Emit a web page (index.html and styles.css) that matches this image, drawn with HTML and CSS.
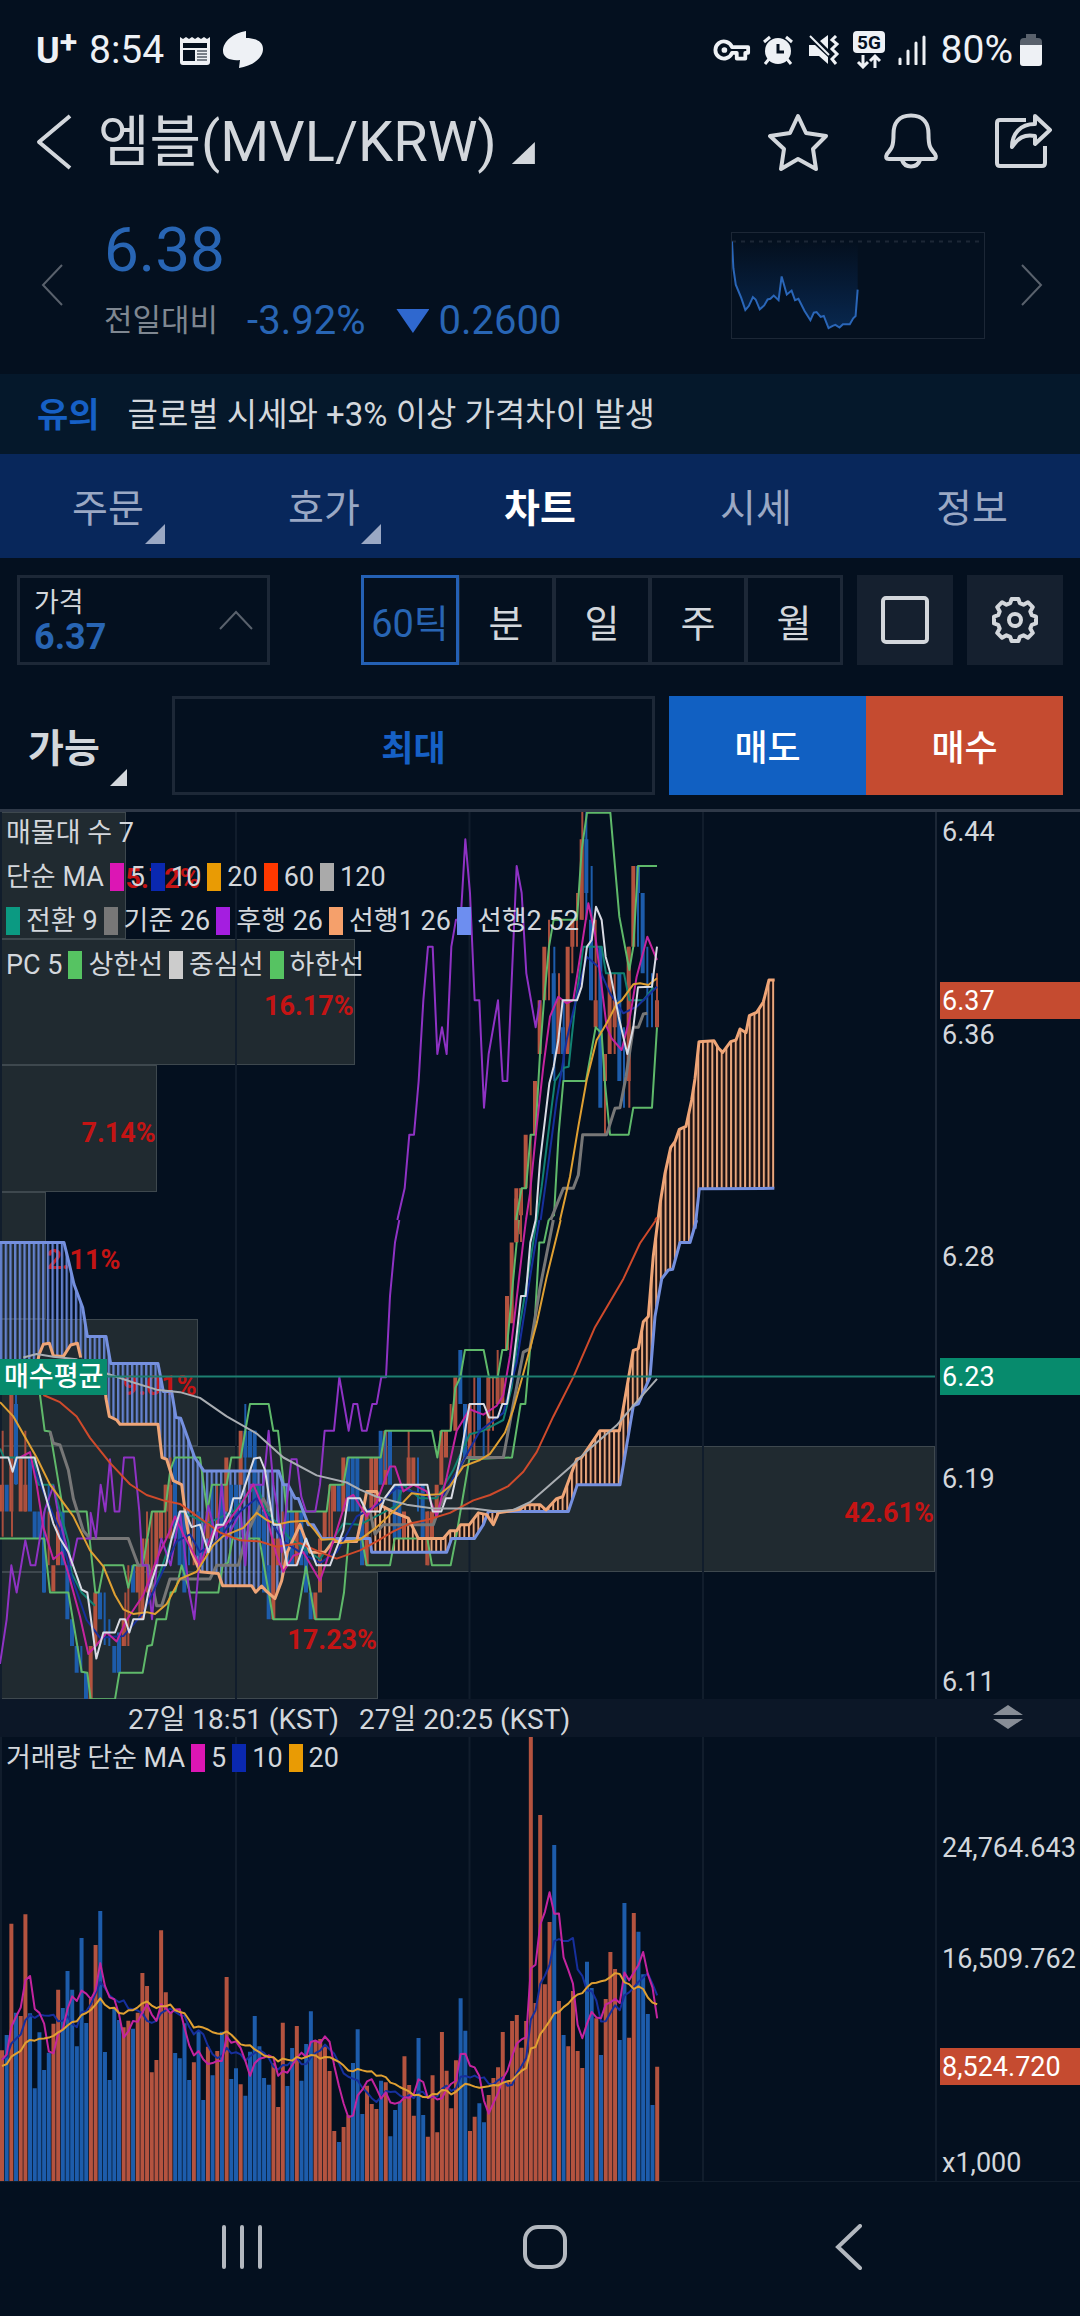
FILE: index.html
```html
<!DOCTYPE html>
<html lang="ko">
<head>
    <meta charset="utf-8">
    <meta name="viewport" content="width=device-width, initial-scale=1">
    <title>엠블(MVL/KRW) 차트</title>
    <link rel="stylesheet" href="styles.css">
</head>
<body>
    <div class="status-bar">
        <span class="carrier">U<sup>+</sup></span>
        <span class="clock">8:54</span>
        <svg class="icon-news" width="32" height="32" viewBox="0 0 32 32">
            <path d="M1 3l3 2 3-2 3 2 3-2 3 2 3-2 3 2 3-2 3 2 3-2v25q0 3-3 3H4q-3 0-3-3z" fill="#eef1f5"/>
            <path d="M4 9h24v5H4zM4 16h12v11H4z" fill="#04101f"/>
            <path d="M18 17h10M18 20h10M18 23h10M18 26h10" stroke="#04101f"/>
        </svg>
        <svg width="40" height="38" viewBox="0 0 40 38">
            <path d="M23 0C11 2 0 10 0 20c0 7 8 10 17 9l-1 8c12-2 24-9 24-19 0-8-8-11-17-11z" fill="#eef1f5"/>
        </svg>
        <div class="status-right">
            <svg width="38" height="24" viewBox="0 0 40 24" fill="none" stroke="#eef1f5" stroke-width="4">
                <path d="M20 9a9 9 0 1 0 0 6h5v6h9v-6h3V9z" stroke-linejoin="round"/>
                <circle cx="12" cy="12" r="2" fill="#eef1f5" stroke-width="2"/>
            </svg>
            <svg class="icon-alarm" width="30" height="30" viewBox="0 0 30 30">
                <circle cx="15" cy="16" r="13" fill="#eef1f5"/>
                <path d="M1 7l6-5M29 7l-6-5M6 24l-4 5M24 24l4 5" stroke="#eef1f5" stroke-width="3"/>
                <path d="M15 9v8h6" fill="none" stroke="#04101f" stroke-width="3"/>
            </svg>
            <svg class="icon-mute" width="32" height="30" viewBox="0 0 32 30">
                <path d="M1 10h6l13 12v7l-9-8H1zM12 6l8-6v14z" fill="#eef1f5"/>
                <path d="M2 1l19 19" stroke="#eef1f5" stroke-width="2"/>
                <path d="M28 1l-4 4 5 4-5 5 5 5-5 5 4 5" fill="none" stroke="#eef1f5" stroke-width="3"/>
            </svg>
            <svg class="icon-5g" width="34" height="38" viewBox="0 0 34 38">
                <rect x="1" width="32" height="22" rx="4" fill="#eef1f5"/>
                <text x="17" y="18" class="net-label">5G</text>
                <path d="M11 24v11M6 31l5 5 5-5M23 37V25M18 30l5-5 5 5" fill="none" stroke="#eef1f5" stroke-width="3"/>
            </svg>
            <svg class="icon-signal" width="28" height="30" viewBox="0 0 28 30">
                <path d="M2 24v5M10 16v13M18 8v21M26 2v27" stroke="#eef1f5" stroke-width="3" stroke-linecap="round"/>
            </svg>
            <span class="clock">80%</span>
            <svg width="22" height="34" viewBox="0 0 22 34">
                <path d="M6 1h10v4h2q4 0 4 4v4H0V9q0-4 4-4h2z" fill="#59616c"/>
                <path d="M0 12h22v18q0 3-3 3H3q-3 0-3-3z" fill="#eef1f5"/>
            </svg>
        </div>
    </div>

    <header class="title-bar">
        <button class="icon-button" aria-label="뒤로">
            <svg width="36" height="58" viewBox="0 0 36 58"><path d="M34 3L3 29l31 26" class="outline"/></svg>
        </button>
        <h1>엠블(MVL/KRW)</h1>
        <span class="corner corner-title"></span>
        <div class="title-actions">
            <button class="icon-button" aria-label="관심">
                <svg width="60" height="60" viewBox="0 0 60 60"><path d="M30 4l8 17 20 3-13 13 3 20-18-10-17 10 3-20L2 24l20-3z" class="outline"/></svg>
            </button>
            <button class="icon-button" aria-label="알림">
                <svg width="60" height="60" viewBox="0 0 60 60"><path d="M30 3.500C17 3.500 12.500 12 12.500 22 12.500 34 11 36 6 42Q3.500 47 8 47H52Q56.500 47 54 42C49 36 47.500 34 47.500 22 47.500 12 43 3.500 30 3.500zM21 48a9.500 9.500 0 0 0 18 0" class="outline"/></svg>
            </button>
            <button class="icon-button" aria-label="공유">
                <svg width="60" height="60" viewBox="0 0 60 60"><path d="M32 8H6q-3 0-3 3v40q0 3 3 3h42q3 0 3-3V34M41 4l15 14-15 14v-8c-11-2-17 2-23 11 0-13 8-23 23-23z" class="outline"/></svg>
            </button>
        </div>
    </header>

    <section class="quote">
        <button class="icon-button" aria-label="이전 종목">
            <svg width="22" height="42" viewBox="0 0 22 42"><path d="M21 1L2 21l19 20" class="outline-dim"/></svg>
        </button>
        <div class="quote-info">
            <div class="quote-price">6.38</div>
            <div class="quote-change">
                <span class="quote-label">전일대비</span>
                <span>-3.92%</span>
                <span class="quote-diff"><i class="triangle-down"></i>0.2600</span>
            </div>
        </div>
        <svg class="sparkline" viewBox="556 693 736 319" preserveAspectRatio="none">
            <defs>
                <linearGradient id="sparkFill" x1="0" y1="0" x2="0" y2="1">
                    <stop offset="0" stop-color="#0a2f63" stop-opacity="0"/>
                    <stop offset="1" stop-color="#0a3468" stop-opacity=".65"/>
                </linearGradient>
            </defs>
            <path d="M556 719H1292" class="spark-base"/>
            <path fill="url(#sparkFill)" d="M556 719L560 800 567 850 583 890 595 927 605 915 617 888 625 895 637 925 650 913 660 895 668 893 678 883 692 897 701 825 716 880 730 868 740 897 750 893 768 930 785 958 795 935 803 933 815 948 824 945 838 982 850 975 858 972 870 980 880 970 900 970 910 952 917 945 923 865V719z"/>
            <path class="spark-line" d="M556 719L560 800 567 850 583 890 595 927 605 915 617 888 625 895 637 925 650 913 660 895 668 893 678 883 692 897 701 825 716 880 730 868 740 897 750 893 768 930 785 958 795 935 803 933 815 948 824 945 838 982 850 975 858 972 870 980 880 970 900 970 910 952 917 945 923 865"/>
        </svg>
        <button class="icon-button" aria-label="다음 종목">
            <svg width="22" height="42" viewBox="0 0 22 42"><path d="M1 1l19 20L1 41" class="outline-dim"/></svg>
        </button>
    </section>

    <div class="notice"><strong>유의</strong><span>글로벌 시세와 +3% 이상 가격차이 발생</span></div>

    <nav class="tabs">
        <button>주문<span class="corner corner-tab"></span></button>
        <button>호가<span class="corner corner-tab"></span></button>
        <button class="active">차트</button>
        <button>시세</button>
        <button>정보</button>
    </nav>

    <div class="toolbar">
        <button class="price-select">
            <span class="price-text"><span>가격</span><b>6.37</b></span>
            <svg width="34" height="20" viewBox="0 0 34 20"><path d="M1 19L17 2l16 17" class="outline-dim"/></svg>
        </button>
        <div class="periods">
            <button class="active">60틱</button>
            <button>분</button>
            <button>일</button>
            <button>주</button>
            <button>월</button>
        </div>
        <button class="tool" aria-label="전체화면">
            <svg width="48" height="48" viewBox="0 0 48 48"><rect x="2" y="2" width="44" height="44" rx="3" class="outline"/></svg>
        </button>
        <button class="tool" aria-label="설정">
            <svg width="48" height="48" viewBox="-24 -24 48 48"><path class="outline" d="M-3.400-21L3.400-21 4.800-16.800 8.500-15.300 12.900-17.800 17.800-12.900 15.300-8.500 16.800-4.800 21-3.400 21 3.400 16.800 4.800 15.300 8.500 17.800 12.900 12.900 17.800 8.500 15.300 4.800 16.800 3.400 21-3.400 21-4.800 16.800-8.500 15.300-12.900 17.800-17.800 12.900-15.300 8.500-16.800 4.800-21 3.400-21-3.400-16.800-4.800-15.300-8.500-17.800-12.900-12.900-17.800-8.500-15.300-4.800-16.800z"/><circle r="6" class="outline"/></svg>
        </button>
    </div>

    <div class="order-bar">
        <button class="available">가능<span class="corner corner-available"></span></button>
        <input class="amount" type="text" value="최대" aria-label="주문 수량">
        <div class="order-buttons">
            <button class="sell">매도</button>
            <button class="buy">매수</button>
        </div>
    </div>

    <main class="chart">
        <div class="pane price-pane">
            <div class="plot">
                <div class="profile" id="profile"></div>
                <svg class="canvas" viewBox="0 0 935 887" preserveAspectRatio="none">
                    <defs>
                        <pattern id="hatchBlue" width="14.040" height="20" patternUnits="userSpaceOnUse"><rect width="7" height="20" fill="#6c8ce0"/></pattern>
                        <pattern id="hatchOrange" width="14.040" height="20" patternUnits="userSpaceOnUse"><rect width="14.040" height="20" fill="#1a1012"/><rect width="6" height="20" fill="#e9a67c"/></pattern>
                    </defs>
                    <path class="grid" d="M1 0V887M236 0V887M469.500 0V887M703 0V887"/>

                    <!-- 6.28 아래 구간 -->
                    <g transform="translate(0 408) scale(.33333 .35714)">
                        <path fill="url(#hatchBlue)" opacity=".9" d="M0 63H192L207 120 222 180 248 245 262 326 318 326 332 402 474 402 490 480 515 480 528 553 542 555 584 665 612 703 836 703 850 741 864 741 885 779 862 930 845 1010 825 1060 800 1040 785 1025 767 1042 755 1024 668 1024 655 990 600 985 575 930 560 850 545 741 520 730 500 670 486 665 474 572 360 572 350 560 328 550 318 500 312 440 242 385 232 345 212 350 190 382 160 380 148 345 130 348 118 375 112 400H0z"/>
                        <path fill="url(#hatchOrange)" d="M1115 930L1115 800 1130 770 1145 800 1185 820 1225 835 1255 892 1330 892 1350 870 1370 870 1382 853 1408 853 1435 820 1460 825 1480 853 1495 820 1560 810 1580 797 1620 797 1638 812 1670 780 1688 775 1730 670 1745 665 1800 590 1858 590 1900 365 1915 360 1930 285 1945 270 1960 100 1974 0 2090 0 2070 63 2040 63 2018 138 2005 140 1985 165 1965 270 1950 440 1915 515 1900 520 1860 741 1732 741 1705 816 1465 816 1450 853 1423 892 1355 892 1340 930z"/>

                        <path class="down-body" d="M20 741V816M48 515V740M90 665V816M104 816V892M118 816V892M132 892V1043M188 816V967M202 967V1118M216 1118V1193M230 1193V1268M258 1268V1342M300 1043V1118M343 1193V1268M357 1155V1268M399 967V1043M525 665V892M539 816V967M553 816V1043M595 816V940M665 741V892M693 741V816M708 741V892M736 590V665M750 590V665M764 590V892M778 741V892M792 816V1043M806 967V1118M862 816V967M876 816V967M904 816V967M918 892V1043M932 1043V1118M1016 741V816M1044 665V816M1058 665V816M1072 665V816M1086 816V967M1142 590V741M1170 590V741M1184 741V892M1198 741V892M1268 741V892M1381 364V515M1395 515V665M1437 440V590"/>
                        <path class="up-body" d="M6 741V816M34 490V816M62 665V816M76 741V816M174 816V967M160 967V1040M272 1193V1342M286 1043V1193M371 1118V1193M413 967V1043M427 892V1118M441 892V967M469 816V967M483 816V892M497 741V816M511 741V892M623 816V892M679 665V816M722 590V741M820 892V1118M834 892V967M890 816V967M960 892V1043M946 1043V1118M974 816V892M1002 741V816M1030 665V816M1100 816V967M1114 665V816M1128 665V816M1156 590V741M1212 816V892M1226 665V741M1240 665V741M1282 816V967M1296 816V892M1310 741V816M1324 590V741M1338 590V665M1366 440V590M1409 515V665M1465 440V590M1493 440V515M1507 440V515M1521 213V364M1535 63V289M1549-60V63"/>
                        <path class="down-wick" d="M48 440V741M132 816V1043M146 741V892M244 1193V1268M314 1043V1190M328 1118V1193M567 892V967M609 892V967M637 741V892M736 515V741M764 590V892M1254 665V816M1451 590V665M1156 590V700"/>
                        <path class="up-wick" d="M8 590V887M36 440V887M76 590V816M146 816V967M385 967V1193M376 1043V1193M418 967V1118M441 816V1043M455 816V1043M497 741V892M511 665V892M581 816V967M651 741V892M848 816V967M988 741V892M996 741V892M1226 590V741M1284 816V967M1352 515V590M1423 440V665M1465 440V665M1479 440V590M1493 364V515M1560 0V40"/>

                        <path class="pc" d="M110 440L120 490 134 590 150 592 190 816 260 816 286 1043 296 1043 312 967 370 967 385 1030 400 967 428 967 442 892 456 816 495 816 511 700 525 665 600 665 622 816 636 741 680 741 694 665 722 665 736 590 750 515 806 515 820 590 834 590 860 816 980 816 990 741 1030 741 1044 665 1142 665 1156 590 1296 590 1312 665 1324 590 1352 590 1366 470 1381 440 1395 364 1451 364 1467 440 1493 440 1507 364 1520 364 1535 213 1550 63 1556 0"/>
                        <path class="pc" d="M0 892H132L150 1043 205 1043 245 1265 262 1268 272 1342 345 1342 358 1268 428 1268 442 1193 456 1190 470 1118 498 1118 512 1043 526 1040 545 967 570 1043 655 1043 668 967 684 960 698 892 778 892 806 1043 820 1118 890 1118 918 970 946 1118 1018 1118 1032 1043 1046 892 1086 892 1100 967 1170 967 1184 892 1282 892 1296 967 1352 967 1366 900 1408 670 1536 665 1562 515 1576 515 1590 364 1604 289 1618 63 1632 63 1646 0"/>
                        <path class="conv" d="M0 640L12 665 100 665 115 741 160 741 180 816 205 900 215 990 245 1043 285 1080M460 1043L490 960 515 892 545 816 620 850 700 816 770 741 800 816 870 892 960 950 1030 850 1080 853 1190 800 1210 741 1260 779 1310 779 1360 700 1409 600 1450 590 1510 560 1535 470 1560 290 1580 180 1610 0"/>
                        <path class="base" d="M150 592L160 625 180 630 205 700 220 780 250 870 270 892 385 892 415 967 445 967 470 1080 485 1080 510 1005 630 1005 650 967 715 967 740 880 790 780 810 816M1110 816L1125 880 1150 853 1300 853 1320 800 1395 665 1510 665 1540 515 1570 370 1590 360 1620 190 1660 0"/>
                        <path class="lead2" d="M0 63H192L207 120 222 180 248 245 262 326 318 326 332 402 474 402 490 480 515 480 528 553 542 555 584 665 612 703 836 703 850 741 864 741 885 779 895 780 925 853 940 853 965 892 1110 892 1115 930 1340 930 1355 892 1423 892 1450 853 1465 816 1705 816 1732 741 1860 741 1900 520 1915 515 1950 440 1965 270 1985 165 2005 140 2018 138 2040 63 2070 63 2090 0"/>
                        <path class="lead1" d="M112 400L118 375 130 348 148 345 160 380 190 382 212 350 232 345 242 385M312 440L318 500 328 550 350 560 360 572 474 572 486 665 500 670 520 730 545 741 560 850 575 930 600 985 655 990 668 1024 755 1024 767 1042 785 1025 800 1040 825 1060 845 1010 862 930 900 853 930 930 975 930 1000 900 1070 900 1086 830 1100 760 1130 760 1145 800 1185 820 1225 835 1255 892 1330 892 1350 870 1370 870 1382 853 1408 853 1435 820 1460 825 1480 853 1495 820 1560 810 1580 797 1620 797 1638 812 1670 780 1688 775 1730 670 1745 665 1800 590 1858 590 1900 365 1915 360 1930 285 1945 270 1960 100 1974 0"/>
                        <path class="lag" d="M0 1243L20 1118 34 967 50 1043 76 897 92 967 106 967 118 900 135 810 160 745 176 830 215 967 232 892 272 892 272 820 288 890 302 741 316 816 330 670 344 816 358 816 372 665 402 665 418 816 428 967 442 967 456 1118 470 967 484 892 512 967 540 816 568 1043 583 1118 597 967 625 800 650 892 665 741 680 892 722 816 736 967 752 741 790 741 806 590 820 741 834 816 845 930 874 670 890 670 904 775 918 816 946 816 960 741 974 590 1002 590 1018 440 1046 590 1060 515 1072 515 1086 590 1100 590 1117 515 1130 515 1144 440 1158 440 1170 213 1185 63 1198 0"/>
                        <path class="ma10" d="M90 665L130 760 180 870 215 1000 260 1120 300 1170 370 1165 430 1100 480 1000 530 900 570 880 600 930 650 900 720 816 770 779 850 900 900 930 960 960 1010 930 1070 830 1130 800 1190 750 1280 770 1330 770 1380 690 1440 590 1510 540 1550 400 1580 220 1618 0"/>
                        <path class="ma5" d="M60 665L90 650 110 741 130 860 160 950 185 930 205 990 240 1110 265 1215 285 1195 320 1155 350 1180 380 1120 430 1050 470 950 505 880 525 830 550 880 600 967 640 870 680 850 720 800 760 740 800 830 830 940 850 985 880 940 910 930 960 1010 1000 900 1040 780 1060 770 1100 830 1130 790 1170 690 1185 690 1210 760 1240 741 1280 760 1310 830 1340 720 1370 590 1409 530 1450 545 1490 520 1510 490 1530 380 1550 220 1570 60 1578 0"/>
                        <path class="ma20" d="M0 510L40 550 110 665 150 741 220 830 270 925 310 970 345 1050 370 1090 400 1103 440 1098 465 1103 500 1075 540 1005 590 985 640 910 670 885 730 862 770 820 800 840 830 853 870 845 920 842 945 870 965 895 1000 893 1020 905 1080 895 1130 860 1170 825 1210 790 1235 765 1275 770 1320 768 1350 745 1390 690 1440 672 1470 655 1515 595 1540 530 1570 430 1610 290 1640 160 1682 0"/>
                        <path class="ma60" d="M130 490L180 510 230 550 270 610 330 680 390 740 440 770 490 785 540 795 600 835 660 875 720 897 780 900 830 915 900 905 960 930 1010 948 1080 925 1130 900 1180 872 1230 850 1280 840 1350 820 1420 785 1470 770 1525 745 1570 705 1610 650 1660 550 1720 440 1785 300 1870 165 1920 65 1968 0"/>
                        <path class="mid" d="M0 665H25L38 705 50 665 104 665 160 850 180 892 205 930 245 1035 262 1043 289 1228 310 1155 345 1155 360 1118 375 1118 388 1155 400 1118 430 1118 445 1043 470 967 498 967 515 892 540 816 555 816 575 860 600 853 625 930 650 853 670 853 690 816 700 779 722 779 736 741 762 668 780 665 795 700 820 853 840 853 862 967 890 967 918 892 950 967 990 967 1005 930 1030 870 1044 779 1080 779 1100 816 1140 816 1154 779 1184 741 1282 741 1298 816 1324 816 1338 779 1354 779 1381 665 1409 515 1451 515 1467 553 1493 553 1507 515 1521 515 1535 440 1549 330 1563 213 1577 213 1591 63 1607 0"/>
                        <path class="ma120" d="M70 385L110 375 160 383 230 390 320 430 400 455 470 475 540 482 600 498 680 550 770 598 850 665 950 715 1040 735 1080 755 1130 775 1220 797 1300 808 1420 808 1490 816 1540 812 1590 790 1640 750 1710 692 1770 640 1850 575 1900 520 1971 445"/>
                    </g>

                    <!-- 6.28 위 구간 -->
                    <g transform="translate(0 -12) scale(.33333)">
                        <path fill="url(#hatchOrange)" d="M1974 1260L1980 1212 1995 1120 2012 1043 2025 1025 2038 988 2058 979 2075 900 2085 836 2097 725 2142 722 2155 744 2168 757 2192 725 2208 720 2220 687 2238 698 2248 647 2270 637 2290 606 2307 540 2324 540V1165H2098L2090 1260z"/>
                        <path class="down-body" d="M1661 520V762M1689 682V762M1759 118V279M1773 359V601M1801 440V923M1858 520V843M1914 198V279M1928 279V520"/>
                        <path class="up-body" d="M1549 1165V1326M1563 1165V1246M1577 1004V1165M1605 843V1004M1619 601V762M1633 440V601M1675 601V762M1703 440V762M1717 359V440M1745 118V359M1787 601V682M1815 762V843M1829 520V762M1844 601V682M1886 440V843M1900 198V440M1971 601V682"/>
                        <path class="down-wick" d="M1663 440V843M1691 601V843M1759 36V359M1775 198V601M1872 682V923M1914 198V440M1942 440V682M1956 520V682"/>
                        <path class="up-wick" d="M1563 1165V1326M1592 1004V1246M1647 359V601M1677 520V762M1717 359V520M1731 279V440M1747 36V359M1787 359V682M1815 762V1004M1844 520V762M1888 440V923M1971 520V682"/>
                        <path class="pc" d="M1548 1260L1565 1165 1578 1165 1592 1004 1606 1004 1620 762 1632 600 1647 440 1661 359 1731 359 1745 150 1761 38 1831 38 1858 350 1888 510 1900 440 1914 198 1971 198"/>
                        <path class="pc" d="M1646 1260L1662 1246 1676 1000 1690 843 1758 843 1787 682 1805 700 1815 850 1830 1004 1886 1004 1900 923 1956 923 1971 682"/>
                        <path class="conv" d="M1610 1260L1625 1160 1650 960 1665 843 1692 803 1706 800 1725 620 1750 440 1805 440 1818 520 1872 520 1888 601 1930 601 1960 562"/>
                        <path class="base" d="M1652 1260L1690 1165 1720 1165 1735 1125 1748 1004 1820 1004 1845 925 1860 923 1878 830 1890 750 1900 682 1915 682 1930 642 1942 640"/>
                        <path class="lead2" d="M2085 1286L2098 1166 2323 1165"/>
                        <path class="lead1" d="M1974 1260L1980 1212 1995 1120 2012 1043 2025 1025 2038 988 2058 979 2075 900 2085 836 2097 725 2142 722 2155 744 2168 757 2192 725 2208 720 2220 687 2238 698 2248 647 2270 637 2290 606 2307 540 2324 540"/>
                        <path class="lag" d="M1192 1260L1214 1165 1228 1004 1242 1004 1256 843 1270 601 1284 440 1298 440 1312 762 1326 682 1340 762 1354 440 1368 359 1382 359 1396 118 1410 279 1424 601 1438 601 1452 923 1466 762 1494 601 1508 843 1522 843 1550 198 1565 279 1579 520 1607 682 1620 601"/>
                        <path class="ma10" d="M1622 1260L1640 1130 1670 900 1700 720 1730 590 1760 470 1795 500 1830 580 1870 640 1910 620 1971 560"/>
                        <path class="ma5" d="M1578 1260L1590 1180 1610 980 1630 800 1650 650 1675 590 1700 610 1720 600 1745 440 1765 310 1785 400 1805 560 1820 680 1835 715 1865 750 1890 650 1910 530 1942 410 1971 480"/>
                        <path class="ma20" d="M1680 1260L1710 1130 1735 980 1760 840 1790 720 1820 670 1850 612 1865 601 1900 553 1920 550 1945 555 1971 535"/>
                        <path class="ma60" d="M1965 1260L1971 1252"/>
                        <path class="mid" d="M1607 1260L1620 1084 1648 850 1661 800 1675 720 1688 601 1731 601 1745 560 1761 440 1775 420 1788 320 1805 360 1817 470 1831 520 1856 650 1882 762 1900 682 1914 562 1956 560 1971 440"/>
                    </g>
                    <path class="average" d="M0 564.500H935"/>
                </svg>
                <div class="average-label">매수평균</div>
                <div class="legend">
                    <div>매물대 수 7</div>
                    <div>단순 MA<i class="c-ma5"></i>5<i class="c-ma10"></i>10<i class="c-ma20"></i>20<i class="c-ma60"></i>60<i class="c-ma120"></i>120</div>
                    <div class="legend-ichimoku"><i class="c-conv"></i>전환 9<i class="c-base"></i>기준 26<i class="c-lag"></i>후행 26<i class="c-lead1"></i>선행1 26<i class="c-lead2"></i>선행2 52</div>
                    <div>PC 5<i class="c-pc"></i>상한선<i class="c-mid"></i>중심선<i class="c-pc"></i>하한선</div>
                </div>
            </div>
            <svg class="axis" viewBox="0 0 143 887">
                <rect x="3" y="170" width="140" height="37" fill="#c54b30"/>
                <rect x="3" y="546" width="140" height="37" fill="#078b6d"/>
                <text x="5" y="29">6.44</text>
                <text x="5" y="198" class="tag">6.37</text>
                <text x="5" y="232">6.36</text>
                <text x="5" y="454">6.28</text>
                <text x="5" y="574" class="tag">6.23</text>
                <text x="5" y="676">6.19</text>
                <text x="5" y="879">6.11</text>
            </svg>
        </div>

        <div class="time-axis">
            <span>27일 18:51 (KST)</span>
            <span>27일 20:25 (KST)</span>
            <svg width="30" height="26" viewBox="0 0 30 26"><path d="M0 11L15 1l15 10zM0 15h30L15 25z" fill="#878d96"/></svg>
        </div>

        <div class="pane volume-pane">
            <div class="plot">
                <svg class="canvas" viewBox="0 0 935 444" preserveAspectRatio="none">
                    <path class="grid" d="M1 0V444M236 0V444M469.500 0V444M703 0V444"/>
                    <g id="volume" transform="translate(0 -7) scale(.33333)"></g>
                </svg>
                <div class="legend">
                    <div>거래량 단순 MA<i class="c-ma5"></i>5<i class="c-ma10"></i>10<i class="c-ma20"></i>20</div>
                </div>
            </div>
            <svg class="axis" viewBox="0 0 143 444">
                <rect x="3" y="311" width="140" height="37" fill="#c54b30"/>
                <text x="5" y="120">24,764.643</text>
                <text x="5" y="231">16,509.762</text>
                <text x="5" y="339" class="tag">8,524.720</text>
                <text x="5" y="435">x1,000</text>
            </svg>
        </div>
    </main>

    <footer class="system-nav">
        <button class="icon-button" aria-label="최근 앱">
            <svg width="44" height="46" viewBox="0 0 44 46"><path d="M4 3v40M22 3v40M40 3v40" class="nav-line"/></svg>
        </button>
        <button class="icon-button" aria-label="홈">
            <svg width="46" height="46" viewBox="0 0 46 46"><rect x="3" y="3" width="40" height="40" rx="13" class="nav-line"/></svg>
        </button>
        <button class="icon-button" aria-label="뒤로">
            <svg width="44" height="46" viewBox="0 0 44 46"><path d="M34 2L12 23l22 21" class="nav-line"/></svg>
        </button>
    </footer>

    <script src="chart.js"></script>
</body>
</html>
```

FILE: styles.css
```css
* {
    box-sizing: border-box;
}
body {
    margin: 0;
    background-color: #04101f;
    color: #d3d7dc;
    font-family: Roboto, "Noto Sans CJK KR", sans-serif;
    font-size: 27px;
}
button, input {
    font: inherit;
    color: inherit;
    background: none;
    border: none;
    border-radius: 0;
    padding: 0;
    margin: 0;
}
button {
    cursor: pointer;
}
svg {
    display: block;
    flex: none;
}
.icon-button {
    flex: none;
}
.outline {
    fill: none;
    stroke: #d3d7dc;
    stroke-width: 4px;
    stroke-linejoin: round;
}
.outline-dim {
    fill: none;
    stroke: #59616c;
    stroke-width: 2px;
}

/* status bar */
.status-bar {
    display: flex;
    align-items: center;
    height: 100px;
    padding: 0 38px 0 36px;
    color: #eef1f5;
}
.carrier {
    font-size: 36px;
    font-weight: bold;
    line-height: 36px;
    width: 53px;
    white-space: nowrap;
}
.carrier sup {
    font-size: 32px;
    line-height: 20px;
    vertical-align: 10px;
}
.clock {
    font-size: 39px;
}
.icon-news {
    margin: 0 12px 0 15px;
}
.status-right {
    display: flex;
    align-items: center;
    margin-left: auto;
    gap: 12px;
}
.status-right .clock {
    margin: 0 -5px 0 3px;
}
.icon-mute {
    margin-left: 3px;
}
.net-label {
    font-size: 19px;
    font-weight: bold;
    text-anchor: middle;
    fill: #04101f;
}

/* title */
.title-bar {
    display: flex;
    align-items: center;
    height: 84px;
    padding: 0 26px 0 36px;
}
.title-bar h1 {
    margin: 0 0 0 26px;
    font-size: 56px;
    font-weight: normal;
    line-height: 84px;
}
.title-actions {
    display: flex;
    gap: 53px;
    margin-left: auto;
}
.corner {
    width: 20px;
    height: 20px;
    background-color: currentColor;
    clip-path: polygon(100% 0, 100% 100%, 0 100%);
}
.corner-title {
    width: 23px;
    height: 22px;
    margin: 22px 0 0 15px;
}

/* quote */
.quote {
    display: flex;
    align-items: center;
    height: 190px;
    padding: 12px 37px 0 41px;
}
.quote-info {
    margin-left: 41px;
    color: #2865b4;
}
.quote-price {
    font-size: 62px;
    line-height: 72px;
}
.quote-change {
    display: flex;
    align-items: center;
    font-size: 40px;
    line-height: 70px;
}
.quote-label {
    font-size: 31px;
    color: #7f8791;
    margin-right: 29px;
}
.quote-diff {
    display: flex;
    align-items: center;
    margin-left: 31px;
}
.triangle-down {
    width: 33px;
    height: 24px;
    margin-right: 9px;
    background-color: #2f68cf;
    clip-path: polygon(0 0, 100% 0, 50% 100%);
}
.sparkline {
    width: 254px;
    height: 107px;
    margin: 0 36px 0 auto;
    border: 1px solid #1c2736;
}
.spark-base {
    stroke: #1c2736;
    stroke-width: 2px;
    stroke-dasharray: 4 5;
    vector-effect: non-scaling-stroke;
}
.spark-line {
    fill: none;
    stroke: #2a66b8;
    stroke-width: 2px;
    vector-effect: non-scaling-stroke;
}

/* notice */
.notice {
    display: flex;
    align-items: center;
    gap: 28px;
    height: 80px;
    padding: 0 37px 4px;
    background-color: #05182b;
    font-size: 33px;
}
.notice strong {
    color: #1660c6;
    font-size: 34px;
}

/* tabs */
.tabs {
    display: flex;
    height: 104px;
    background-color: #08275b;
    color: #9aa8c4;
    font-size: 39px;
}
.tabs button {
    flex: 1;
    position: relative;
    padding-bottom: 2px;
}
.tabs .active {
    color: #ffffff;
    font-weight: bold;
}
.corner-tab {
    position: absolute;
    right: 51px;
    bottom: 14px;
}

/* toolbar */
.toolbar {
    display: flex;
    gap: 14px;
    padding: 17px 17px 31px;
}
.price-select {
    display: flex;
    align-items: center;
    justify-content: space-between;
    width: 253px;
    height: 90px;
    padding: 0 14px;
    border: 3px solid #1d2837;
}
.price-text {
    text-align: left;
    font-size: 27px;
    line-height: 34px;
}
.price-text span, .price-text b {
    display: block;
}
.price-text b {
    color: #2865b4;
    font-size: 36px;
}
.periods {
    display: flex;
    margin-left: auto;
    font-size: 38px;
}
.periods button {
    width: 98px;
    height: 90px;
    border: 3px solid #1d2837;
    margin-left: -2px;
}
.periods .active {
    position: relative;
    border-color: #2460b4;
    color: #2865b4;
}
.tool {
    display: flex;
    align-items: center;
    justify-content: center;
    width: 96px;
    height: 90px;
    background-color: #15202f;
}

/* order bar */
.order-bar {
    display: flex;
    align-items: center;
    height: 99px;
    padding: 0 17px;
    margin-bottom: 14px;
}
.available {
    position: relative;
    width: 155px;
    height: 99px;
    padding-left: 11px;
    padding-bottom: 2px;
    text-align: left;
    font-size: 39px;
    font-weight: bold;
}
.corner-available {
    position: absolute;
    width: 17px;
    height: 17px;
    right: 45px;
    bottom: 9px;
}
.amount {
    flex: 1;
    min-width: 0;
    height: 99px;
    border: 3px solid #1d2837;
    color: #1660c6;
    font-size: 35px;
    font-weight: bold;
    text-align: center;
}
.order-buttons {
    display: flex;
    margin-left: 14px;
    font-size: 36px;
    font-weight: 500;
    color: #ffffff;
}
.order-buttons button {
    width: 197px;
    height: 99px;
    padding-bottom: 2px;
}
.sell {
    background-color: #1160c2;
}
.buy {
    background-color: #c54b30;
}

/* chart */
.chart {
    border-top: 3px solid #2f3948;
}
.pane {
    display: flex;
}
.price-pane {
    height: 887px;
}
.volume-pane {
    height: 445px;
    border-bottom: 1px solid #111d2c;
}
.plot {
    position: relative;
    flex: 1;
    border-right: 2px solid #1c2736;
}
.volume-pane .plot {
    border-color: #111d2c;
}
.canvas {
    position: absolute;
    inset: 0;
    width: 100%;
    height: 100%;
}
.canvas path {
    vector-effect: non-scaling-stroke;
    stroke-linejoin: round;
}
.axis {
    width: 143px;
    height: 100%;
}
.axis text {
    fill: #d3d7dc;
    font-size: 27px;
}
.axis .tag {
    fill: #ffffff;
}
.profile {
    position: absolute;
    inset: 0;
    display: flex;
    flex-direction: column;
    color: #c41414;
    font-weight: bold;
}
.profile-row {
    flex: 1;
    display: flex;
    align-items: center;
}
.profile-row span {
    padding-top: 8px;
}
.profile-bar {
    display: flex;
    align-items: center;
    justify-content: flex-end;
    height: 100%;
    background-color: #202a30;
    border: 1px solid #3e484e;
}
.average-label {
    position: absolute;
    left: 0;
    top: 547px;
    padding: 0 4px;
    background-color: #078b6d;
    color: #ffffff;
    font-size: 27px;
    font-weight: 500;
    line-height: 36px;
}
.legend {
    position: relative;
    padding: 0 6px;
    line-height: 44px;
    white-space: nowrap;
}
.legend div {
    display: flex;
    align-items: center;
    height: 44px;
    padding-bottom: 2px;
}
.legend i {
    width: 14px;
    height: 28px;
    margin: 0 6px;
}
.legend-ichimoku i:first-child {
    margin-left: 0;
}
.time-axis {
    display: flex;
    align-items: center;
    gap: 20px;
    height: 38px;
    padding: 0 57px 2px 128px;
    background-color: #0c1727;
    font-size: 28px;
}
.time-axis svg {
    margin-left: auto;
}

.c-ma5 { background-color: #dc16b4; }
.c-ma10 { background-color: #0a28b0; }
.c-ma20 { background-color: #e99b04; }
.c-ma60 { background-color: #ff3800; }
.c-ma120 { background-color: #aaaaaa; }
.c-conv { background-color: #0b9a82; }
.c-base { background-color: #777777; }
.c-lag { background-color: #a41ee0; }
.c-lead1 { background-color: #f5a06b; }
.c-lead2 { background-color: #6d8ef0; }
.c-pc { background-color: #56c362; }
.c-mid { background-color: #cccccc; }

.grid { stroke: #111d2c; stroke-width: 2px; }
.up-body, .down-body, .up-wick, .down-wick,
.pc, .mid, .conv, .base, .lead1, .lead2, .lag,
.ma5, .ma10, .ma20, .ma60, .ma120 { fill: none; }
.up-body { stroke: #b4533f; stroke-width: 4px; }
.down-body { stroke: #1d5cab; stroke-width: 4px; }
.up-wick { stroke: #a84e3d; stroke-width: 2px; }
.down-wick { stroke: #1d5cab; stroke-width: 2px; }
.pc { stroke: #5fb96a; stroke-width: 2px; }
.mid { stroke: #d9dbe4; stroke-width: 2px; }
.conv { stroke: #128272; stroke-width: 2px; }
.base { stroke: #777777; stroke-width: 3px; }
.lead1 { stroke: #efa577; stroke-width: 3px; }
.lead2 { stroke: #7590df; stroke-width: 3px; }
.lag { stroke: #8f32c4; stroke-width: 2px; }
.ma5 { stroke: #c4249f; stroke-width: 2px; }
.ma10 { stroke: #162f9c; stroke-width: 2px; }
.ma20 { stroke: #e0a032; stroke-width: 2px; }
.ma60 { stroke: #cf4a2b; stroke-width: 2px; }
.ma120 { stroke: #a9adb2; stroke-width: 2px; }
.average { stroke: #1d7f71; stroke-width: 2px; }

/* system navigation */
.system-nav {
    display: flex;
    align-items: center;
    justify-content: space-between;
    height: 130px;
    padding: 0 210px 0 220px;
}
.nav-line {
    fill: none;
    stroke: #b3b8bf;
    stroke-width: 4px;
    stroke-linecap: round;
}
```

FILE: chart.js
```js
const SVG_NS = 'http://www.w3.org/2000/svg';

// 매물대
const profile = [5.72, 16.17, 7.14, 2.11, 9.01, 42.61, 17.23];
const maxShare = Math.max(...profile);
const profileBox = document.getElementById('profile');

profile.forEach(share => {
    const row = document.createElement('div');
    const bar = document.createElement('div');
    const label = document.createElement('span');
    row.className = 'profile-row';
    bar.className = 'profile-bar';
    bar.style.width = (share / maxShare * 100) + '%';
    label.textContent = share.toFixed(2) + '%';
    row.appendChild(bar);
    // 막대가 짧으면 라벨은 바깥에
    (share > 6 ? bar : row).appendChild(label);
    profileBox.appendChild(row);
});

// 거래량: r 상승, b 하락
const bars = ('r961 b915 r581 b848 r858 r553 b850 b1075 b907 b1020 b968 r881 r779 b834 b723 b779 b949 b624 b879 r806 ' +
    'r645 b543 b966 b1050 b835 b870 r892 r872 b896 r848 r729 r768 r1027 r990 r601 r787 r845 b969 b985 b880 ' +
    'b1050 r997 b903 b1110 r950 b1036 r963 b905 r741 b1047 b1015 r1063 b1097 b965 b858 b949 b1044 b1064 r1000 r1131 ' +
    'r878 b1068 b954 r888 b1052 b942 b844 r932 r927 r950 r1023 r1203 b1236 r1191 r1156 b999 b898 b1152 r1067 r1122 ' +
    'r1137 b1052 r1057 b1219 b1140 b1115 r979 r1065 r1157 b924 b1155 r1220 r1036 r1207 r906 r1022 r1135 r991 b805 b902 ' +
    'r1203 r1160 b1120 b1177 r1095 r1044 r1012 r906 r1055 r873 r855 r953 r873 r21 r819 r255 r763 r576 b345 r813 ' +
    'b915 r949 r783 r963 r1014 b695 b774 r865 b975 r807 r666 r717 b930 b519 r923 r549 b605 b733 b852 b1125 r1010').split(' ');
const BASELINE = 1353;
const STEP = 14.04;
const volume = document.getElementById('volume');
const paths = { r: '', b: '' };
const levels = bars.map(b => Number(b.slice(1)));

bars.forEach((b, i) => {
    paths[b[0]] += `M${(6 + i * STEP).toFixed(1)} ${levels[i]}V${BASELINE}`;
});

function addPath(d, className) {
    const path = document.createElementNS(SVG_NS, 'path');
    path.setAttribute('d', d);
    path.setAttribute('class', className);
    volume.appendChild(path);
}

// 화면 밖 이전 구간
const history = [...Array(10).fill(1028), ...Array(5).fill(986), ...Array(4).fill(997)];
const all = history.concat(levels);

function average(period) {
    return levels.map((_, i) => {
        const end = i + history.length + 1;
        const sum = all.slice(end - period, end).reduce((a, v) => a + v, 0);
        return `${i ? 'L' : 'M'}${(6 + i * STEP).toFixed(1)} ${(sum / period).toFixed(1)}`;
    }).join('');
}

addPath(paths.r, 'up-body');
addPath(paths.b, 'down-body');
addPath(average(10), 'ma10');
addPath(average(5), 'ma5');
addPath(average(20), 'ma20');
```
